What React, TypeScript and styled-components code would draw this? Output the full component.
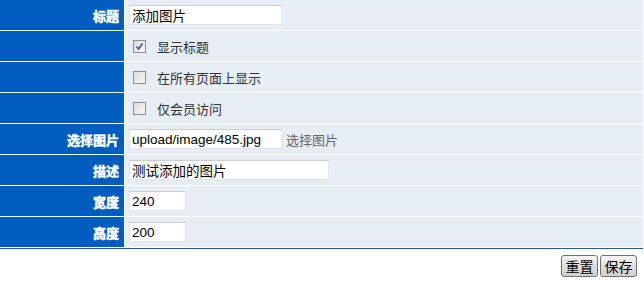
import styled, { createGlobalStyle } from 'styled-components'

const GlobalStyle = createGlobalStyle`
  html, body {
    margin: 0;
    padding: 0;
    background: #ffffff;
    font-family: "Liberation Sans", Arial, "Noto Sans CJK SC", sans-serif;
    font-size: 13px;
  }
`

const Form = styled.div`
  width: 643px;
`

const Table = styled.div`
  display: flex;
  flex-direction: column;
  border-bottom: 1px solid #1a5cb0;
`

const Row = styled.div`
  display: grid;
  grid-template-columns: 124px 1fr;
  column-gap: 1px;
  height: 30px;
  border-bottom: 1px solid #ffffff;
`

const Label = styled.div`
  background: #015cbf;
  color: #ffffff;
  font-weight: bold;
  font-family: "Noto Sans CJK SC", "Liberation Sans", sans-serif;
  font-size: 13px;
  -webkit-text-stroke: 0.45px #ffffff;
  display: flex;
  align-items: center;
  justify-content: flex-end;
  padding-right: 5px;
`

const Cell = styled.div`
  background: #e6edf5;
  display: flex;
  align-items: center;
  padding-left: 4px;
  gap: 4px;
`

const Input = styled.input<{ $w: number }>`
  box-sizing: border-box;
  width: ${p => p.$w}px;
  height: 20px;
  margin: 0;
  border: 1px solid #e2e6ea;
  border-top-color: #c9ced3;
  background: #ffffff;
  padding: 0 2px;
  font-family: "Liberation Sans", Arial, "Noto Sans CJK SC", sans-serif;
  font-size: 13.5px;
  color: #000000;
  outline: none;
`

const CheckLine = styled.label`
  display: flex;
  align-items: center;
  padding-left: 4px;
  gap: 11px;
  color: #333333;
  font-family: "Noto Sans CJK SC", sans-serif;
  font-size: 13px;
`

const Box = styled.span`
  box-sizing: border-box;
  width: 13px;
  height: 13px;
  border: 1px solid #8f8f8f;
  background: linear-gradient(135deg, #dcdcdc 0%, #f7f7f7 100%);
  display: flex;
  align-items: center;
  justify-content: center;
`

const Pick = styled.span`
  color: #666666;
  font-family: "Noto Sans CJK SC", sans-serif;
  font-size: 13px;
`

const Actions = styled.div`
  display: flex;
  justify-content: flex-end;
  gap: 2px;
  padding: 6px 6px 0 0;
`

const Button = styled.button`
  box-sizing: border-box;
  width: 37px;
  height: 22px;
  margin: 0;
  padding: 0;
  border: 1px solid #707070;
  border-radius: 3px;
  background: linear-gradient(#f6f6f6, #dedede 50%, #d2d2d2);
  color: #000000;
  font-family: "Noto Sans CJK SC", sans-serif;
  font-size: 14px;
`

function Check({ on, text }: { on?: boolean; text: string }) {
  return (
    <CheckLine>
      <Box>
        {on && (
          <svg width="9" height="9" viewBox="0 0 9 9">
            <path d="M1.5 4.5 L3.5 7 L7.5 1.5" fill="none" stroke="#3a4fa8" strokeWidth="1.6" />
          </svg>
        )}
      </Box>
      {text}
    </CheckLine>
  )
}

export default function App() {
  return (
    <Form>
      <GlobalStyle />
      <Table>
        <Row>
          <Label>标题</Label>
          <Cell><Input $w={153} defaultValue="添加图片" /></Cell>
        </Row>
        <Row>
          <Label />
          <Cell><Check on text="显示标题" /></Cell>
        </Row>
        <Row>
          <Label />
          <Cell><Check text="在所有页面上显示" /></Cell>
        </Row>
        <Row>
          <Label />
          <Cell><Check text="仅会员访问" /></Cell>
        </Row>
        <Row>
          <Label>选择图片</Label>
          <Cell>
            <Input $w={153} defaultValue="upload/image/485.jpg" />
            <Pick>选择图片</Pick>
          </Cell>
        </Row>
        <Row>
          <Label>描述</Label>
          <Cell><Input $w={200} defaultValue="测试添加的图片" /></Cell>
        </Row>
        <Row>
          <Label>宽度</Label>
          <Cell><Input $w={57} defaultValue="240" /></Cell>
        </Row>
        <Row>
          <Label>高度</Label>
          <Cell><Input $w={57} defaultValue="200" /></Cell>
        </Row>
      </Table>
      <Actions>
        <Button>重置</Button>
        <Button>保存</Button>
      </Actions>
    </Form>
  )
}
